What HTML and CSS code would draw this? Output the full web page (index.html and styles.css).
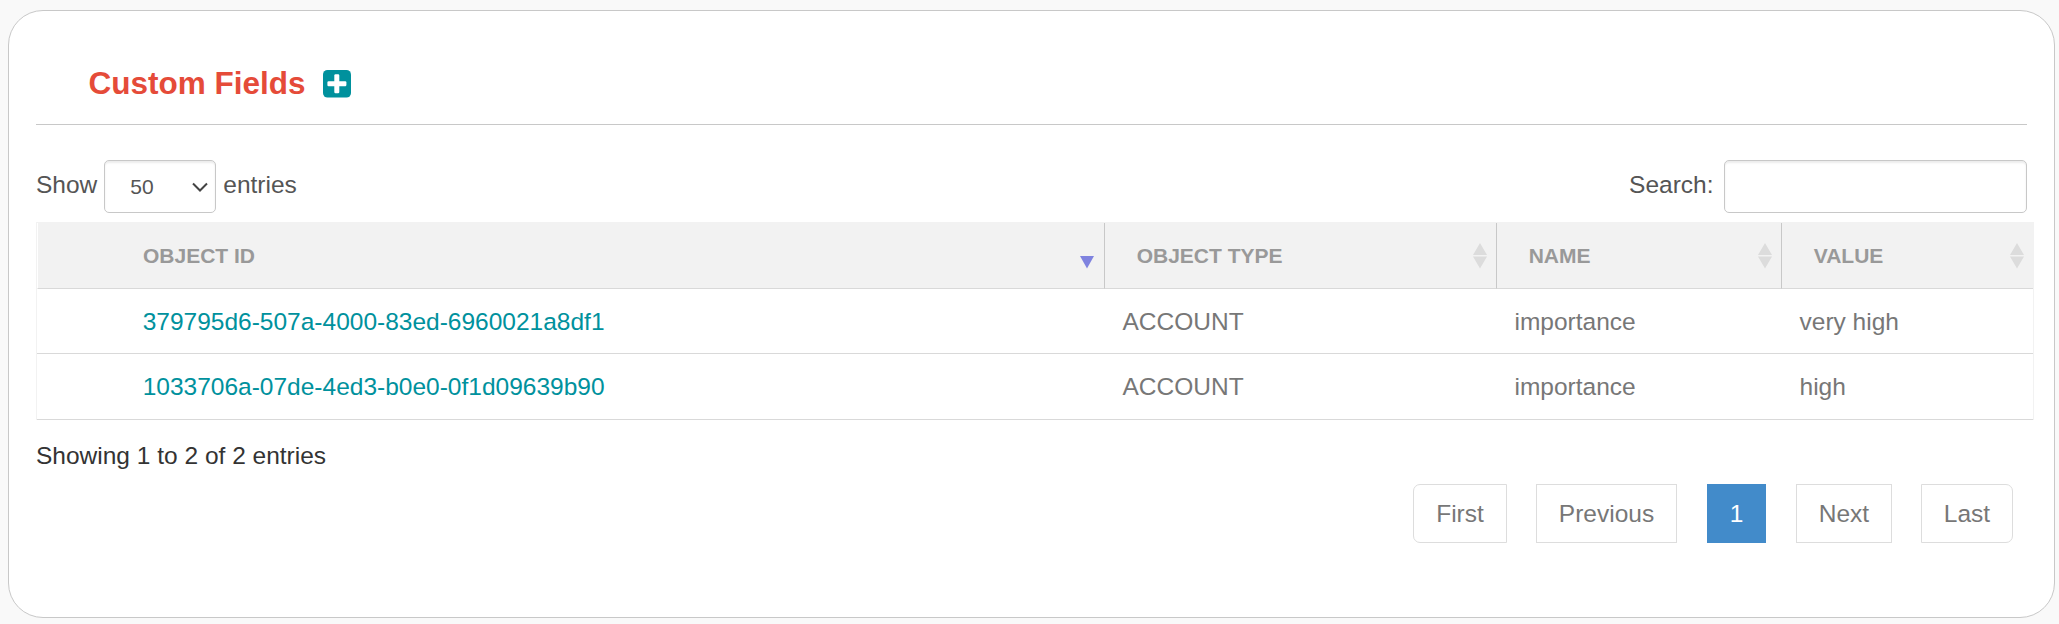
FILE: index.html
```html
<!DOCTYPE html>
<html lang="en">
<head>
<meta charset="utf-8">
<title>Custom Fields</title>
<link rel="stylesheet" href="styles.css">
</head>
<body>
<main class="card">
  <header class="card-header">
    <h2 class="card-title">Custom Fields</h2>
    <svg class="add-icon" width="28" height="28" viewBox="0 0 28 28" role="img" aria-label="Add">
      <rect width="28" height="27.5" rx="4.5" fill="#00919d"/>
      <rect x="11.300" y="4.200" width="5" height="19" rx="1.200" fill="#fff"/>
      <rect x="4.400" y="11.200" width="19" height="5" rx="1.200" fill="#fff"/>
    </svg>
  </header>

  <div class="controls">
    <div class="length">
      <span>Show</span>
      <span class="select">50
        <svg class="chevron" width="16" height="10" viewBox="0 0 16 10"><path d="M1 1.500l7 7 7-7" fill="none" stroke="#444" stroke-width="2"/></svg>
      </span>
      <span>entries</span>
    </div>
    <label class="search"><span>Search:</span><input class="search-input" type="text"></label>
  </div>

  <table class="grid">
    <colgroup><col class="col-id"><col class="col-type"><col class="col-name"><col class="col-value"></colgroup>
    <thead>
      <tr>
        <th><div class="head"><span>OBJECT ID</span><svg class="sort sort-desc" width="14" height="26" viewBox="0 0 14 26"><path d="M0 13h14L7 25.500z" fill="#7f83df"/></svg></div></th>
        <th><div class="head"><span>OBJECT TYPE</span><svg class="sort" width="14" height="26" viewBox="0 0 14 26"><path d="M7 0l7 12H0zM0 13.500h14L7 25.500z" fill="#dcdcdc"/></svg></div></th>
        <th><div class="head"><span>NAME</span><svg class="sort" width="14" height="26" viewBox="0 0 14 26"><path d="M7 0l7 12H0zM0 13.500h14L7 25.500z" fill="#dcdcdc"/></svg></div></th>
        <th><div class="head"><span>VALUE</span><svg class="sort" width="14" height="26" viewBox="0 0 14 26"><path d="M7 0l7 12H0zM0 13.500h14L7 25.500z" fill="#dcdcdc"/></svg></div></th>
      </tr>
    </thead>
    <tbody>
      <tr><td><a class="link">379795d6-507a-4000-83ed-6960021a8df1</a></td><td>ACCOUNT</td><td>importance</td><td>very high</td></tr>
      <tr><td><a class="link">1033706a-07de-4ed3-b0e0-0f1d09639b90</a></td><td>ACCOUNT</td><td>importance</td><td>high</td></tr>
    </tbody>
  </table>

  <div class="info">Showing 1 to 2 of 2 entries</div>
  <nav class="pagination">
    <a class="page page-first">First</a>
    <a class="page page-prev">Previous</a>
    <a class="page page-current">1</a>
    <a class="page page-next">Next</a>
    <a class="page page-last">Last</a>
  </nav>
</main>
</body>
</html>
```
FILE: styles.css
```css
* { box-sizing: border-box; }

body {
  margin: 0;
  padding: 10px 4px 6px 8px;
  background: #f9f9f9;
  font-family: "Liberation Sans", Arial, sans-serif;
  font-size: 24.5px;
  line-height: 35px;
  color: #555;
}

.card {
  width: 2047px;
  height: 608px;
  padding: 0 27px;
  background: #fff;
  border: 1px solid #c8c8c8;
  border-radius: 35px;
}

.card-header {
  display: flex;
  align-items: flex-start;
  height: 114px;
  padding: 55px 0 0 52.5px;
  border-bottom: 1px solid #c8c8c8;
}

.card-title {
  margin: 0;
  font-size: 31.5px;
  line-height: 35px;
  color: #e54b39;
}

.add-icon { margin: 4px 0 0 17px; }

.controls {
  display: flex;
  justify-content: space-between;
  height: 97px;
  padding-top: 35px;
}

.length, .search { display: flex; }

.length > span:first-child, .length > span:last-child, .search > span { padding-top: 7px; }

.select {
  display: flex;
  align-items: center;
  justify-content: space-between;
  width: 112px;
  height: 53px;
  margin: 0 7px 0 7px;
  padding: 0 7px 0 25px;
  border: 1px solid #c8c8c8;
  border-radius: 5px;
  box-shadow: inset 0 2px 2px rgba(0, 0, 0, .075);
  font-size: 21px;
  color: #555;
}

.search-input {
  width: 303px;
  height: 53px;
  margin: 0 0 0 10.5px;
  border: 1px solid #c8c8c8;
  border-radius: 5px;
  box-shadow: inset 0 2px 2px rgba(0, 0, 0, .075);
}

.grid {
  width: 1998px;
  table-layout: fixed;
  border-collapse: separate;
  border-spacing: 0;
  border: 1px solid #f2f2f2;
  border-bottom: 0;
}

.col-id { width: 1067px; }
.col-type { width: 392px; }
.col-name { width: 285px; }
.col-value { width: 252px; }

th {
  height: 66px;
  padding: 0 9.5px 0 31.7px;
  background: #f2f2f2;
  border-left: 1px solid #c8c8c8;
  border-bottom: 1px solid #d9d9d9;
  font-size: 21px;
  text-align: left;
  color: #999;
}

th:first-child { padding-left: 105px; border-left-color: #fff; }

.head {
  display: flex;
  align-items: center;
  justify-content: space-between;
}

.sort-desc { margin-right: 1px; }

td {
  height: 65px;
  padding: 0 0 0 18.5px;
  border-bottom: 1px solid #d9d9d9;
  color: #777;
}

td:first-child { padding-left: 105.7px; }
tr:last-child td { height: 66px; padding-bottom: 1px; }

.link { color: #00919d; }

.info { margin-top: 18px; color: #333; }

.pagination {
  display: flex;
  justify-content: flex-end;
  margin-top: 11px;
  padding-right: 14px;
}

.page {
  height: 59px;
  padding: 11px 0;
  border: 1px solid #ddd;
  text-align: center;
  color: #777;
}

.page-first { width: 94px; margin-right: 29px; border-radius: 7px 0 0 7px; }
.page-prev { width: 141px; margin-right: 30px; }
.page-current { width: 59px; margin-right: 30px; background: #428bca; border-color: #428bca; color: #fff; }
.page-next { width: 96px; margin-right: 29px; }
.page-last { width: 92px; border-radius: 0 7px 7px 0; }
```
